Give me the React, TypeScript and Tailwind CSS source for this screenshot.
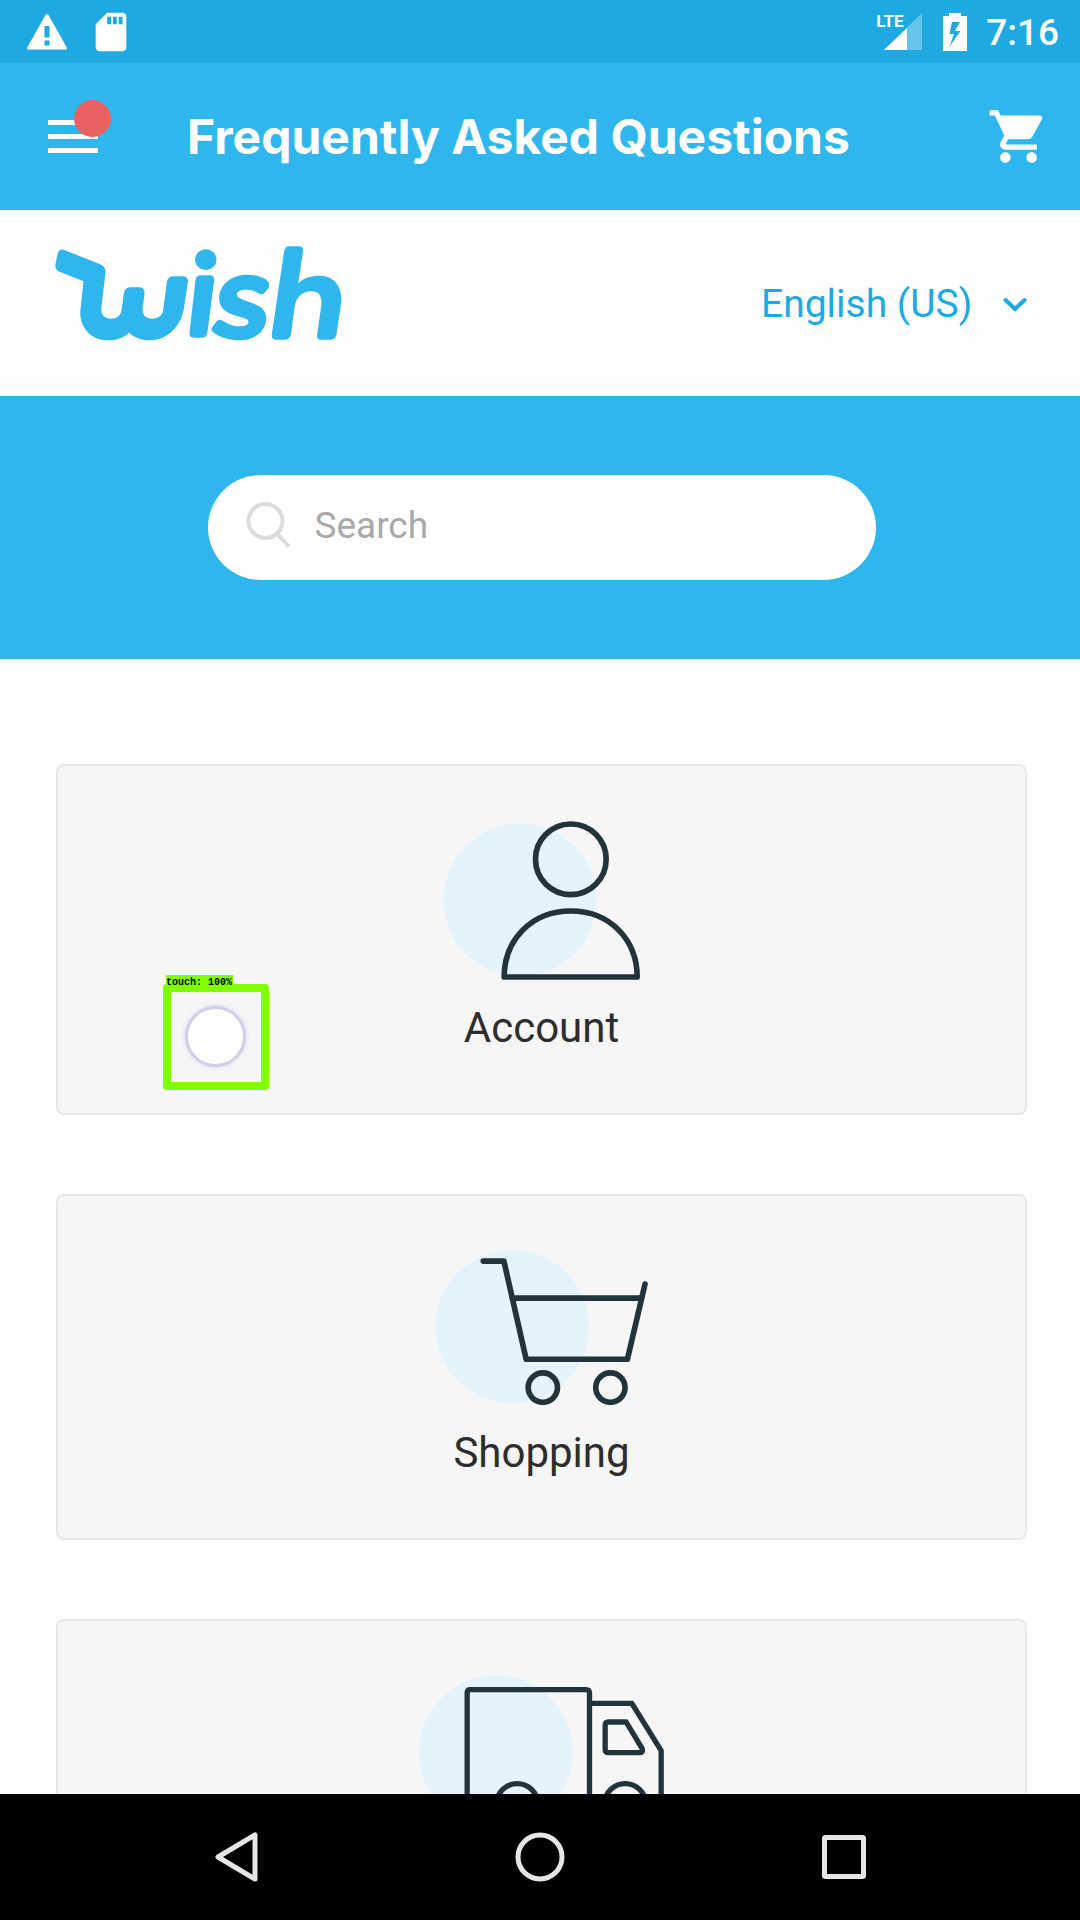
import type { ReactNode } from "react";
import { MdSdCard, MdShoppingCart } from "react-icons/md";

function StatusBar() {
  return (
    <div className="flex h-[63px] shrink-0 items-center justify-between bg-[#1fa9e2] pr-[21px] pl-[27px] text-white">
      <div className="flex items-center gap-[21px]">
        <svg viewBox="0 0 40 36" className="h-9 w-10" aria-hidden="true">
          <path
            fill="#fff"
            fillRule="evenodd"
            d="M18.500 1Q20 -1 21.500 1L39.500 33Q40.500 35.500 38.500 35.500H1.500Q-0.500 35.500 0.500 33ZM17.500 12V23.500H22.500V12ZM17.500 26.500V31.500H22.500V26.500Z"
          />
        </svg>
        <MdSdCard className="size-[46px]" />
      </div>
      <div className="flex items-center">
        <div className="relative h-[38px] w-[46px]">
          <svg viewBox="0 0 46 38" className="h-full w-full" aria-hidden="true">
            <path d="M8 37L46 0V37Z" fill="#fff" fillOpacity="0.32" />
            <path d="M8 37L31 15V37Z" fill="#fff" />
          </svg>
          <span className="absolute top-0 left-0 font-['Liberation_Sans_Narrow',Roboto] text-[17px] leading-4 font-bold">
            LTE
          </span>
        </div>
        <svg viewBox="0 0 24 38" className="ml-[21px] h-[38px] w-6" aria-hidden="true">
          <path
            fill="#fff"
            fillRule="evenodd"
            d="M6 0H18V3H24V38H0V3H6ZM9 9L6.500 21H11L6.500 33.500L17.500 18H12L17 9Z"
          />
        </svg>
        <span className="mt-[3px] ml-[19px] font-[Roboto] text-[37px] leading-[44px] font-medium">7:16</span>
      </div>
    </div>
  );
}

function Header() {
  return (
    <header className="flex h-[147px] shrink-0 items-center bg-[#2fb6ec] pr-[30px] pl-12 text-white">
      <button type="button" aria-label="Menu" className="relative flex w-[50px] flex-col gap-[9px]">
        <span className="h-[5px] bg-white" />
        <span className="h-[5px] bg-white" />
        <span className="h-[5px] bg-white" />
        <span className="absolute -top-[20px] left-[26px] size-[37px] rounded-full bg-[#eb6161]" />
      </button>
      <h1 className="ml-[89px] flex-1 font-[Inter] text-[48px] leading-[60px] font-bold whitespace-nowrap">
        Frequently Asked Questions
      </h1>
      <button type="button" aria-label="Cart">
        <MdShoppingCart className="size-[63px]" />
      </button>
    </header>
  );
}

function WishLogo() {
  return (
    <svg viewBox="165 110 860 285" className="h-[95px] w-[287px]" fill="#2fb6ec" role="img" aria-label="Wish">
      <path d="M190 121L300 165Q318 173 316 190L303 300Q303 328 332 328Q362 328 365 298L371 252Q373 234 391 234H416Q435 234 433 253L427 300Q427 328 455 328Q487 328 490 295L500 218Q503 201 521 201H546Q565 201 563 218L551 300C540 355 500 393 448 393C420 393 400 382 387 370C372 384 350 393 322 393C270 393 235 350 241 300L250 216L180 188Q163 181 166 164L172 135Q176 117 190 121Z" />
      <path d="M603 198H628Q643 198 642 212L622 368Q620 385 606 385H581Q566 385 568 371L586 212Q588 198 603 198Z" />
      <ellipse cx="617" cy="151" rx="32" ry="31" />
      <path d="M797 210C780 199 760 196 740 196C695 196 657 225 657 268C657 300 685 312 710 320C735 327 745 329 745 338C745 346 735 351 715 351C695 351 685 344 665 333Q657 329 650 336L637 352Q630 361 638 368C660 385 690 393 718 393C765 393 798 365 798 325C798 298 775 287 745 277C722 270 710 265 710 255C710 247 720 241 738 241C755 241 765 245 778 253Q787 258 794 250L805 235Q811 220 797 210Z" />
      <path d="M852 125Q855 111 868 111H895Q910 111 909 123L894 222C910 205 935 199 958 199C1005 199 1027 235 1023 280L1009 375Q1006 391 992 391H962Q949 391 951 378L963 290C967 262 957 246 933 246C905 246 886 265 882 300L873 372Q870 391 855 391H828Q813 391 815 375Z" />
    </svg>
  );
}

function LanguageRow() {
  return (
    <div className="flex h-[186px] items-start justify-between pt-9 pr-[53px] pl-[55px]">
      <WishLogo />
      <div className="relative mt-[34px]">
        <select
          aria-label="Language"
          className="appearance-none bg-transparent pr-[54px] font-[Roboto] text-[39px] leading-[48px] text-[#1fa9e2] outline-none"
        >
          <option>English (US)</option>
        </select>
        <svg
          viewBox="0 0 24 16"
          className="pointer-events-none absolute top-[17px] right-0 h-4 w-6"
          fill="none"
          stroke="#1fa9e2"
          strokeWidth="4"
          strokeLinecap="round"
          aria-hidden="true"
        >
          <path d="M2.500 3L12 12L21.500 3" />
        </svg>
      </div>
    </div>
  );
}

function SearchBand() {
  return (
    <div className="flex h-[263px] items-center justify-center bg-[#2fb6ec] pl-1">
      <label className="flex h-[105px] w-[62%] items-center rounded-full bg-white pl-[38px]">
        <svg viewBox="0 0 45 48" className="mt-[-5px] h-12 w-[45px]" fill="none" stroke="#dcdcdc" aria-hidden="true">
          <circle cx="19.500" cy="20" r="17" strokeWidth="4" />
          <path d="M31 32.500L43 45.500" strokeWidth="4" />
        </svg>
        <input
          type="search"
          aria-label="Search"
          placeholder="Search"
          className="mb-1 ml-[23px] min-w-0 flex-1 bg-transparent font-[Roboto] text-[37px] leading-[48px] outline-none placeholder:text-[#a9a9a9]"
        />
      </label>
    </div>
  );
}

const LINE = "#22333b";
const DISC = "#e4f3fc";

function AccountIcon() {
  return (
    <svg viewBox="130 90 590 480" className="h-40 w-[197px]" fill="none" aria-hidden="true">
      <circle cx="361" cy="330" r="229" fill={DISC} />
      <g stroke={LINE} strokeWidth="17" strokeLinejoin="round">
        <circle cx="513" cy="208" r="106" />
        <path d="M313 561C313 450 395 363 513 363C631 363 712 450 712 561Z" />
      </g>
    </svg>
  );
}

function ShoppingIcon() {
  return (
    <svg viewBox="105 90 640 465" className="h-[155px] w-[213px]" fill="none" aria-hidden="true">
      <circle cx="337" cy="320" r="230" fill={DISC} />
      <g stroke={LINE} strokeWidth="17" strokeLinejoin="round" strokeLinecap="round">
        <path d="M250 123H312L379 418H683L736 192" />
        <path d="M338 234H725" />
        <circle cx="429" cy="503" r="44" />
        <circle cx="632" cy="503" r="44" />
      </g>
    </svg>
  );
}

function TruckIcon() {
  return (
    <svg viewBox="58 225 734 465" className="h-[155px] w-[245px]" fill="none" aria-hidden="true">
      <circle cx="288" cy="457" r="230" fill={DISC} />
      <g stroke={LINE} strokeWidth="16" strokeLinejoin="round">
        <path d="M290 620H210Q202 620 202 612V278Q202 269 211 269H558Q569 269 569 280V620H414" />
        <path d="M569 310H696L784 452V620H738M569 620H614" />
        <path d="M626 366H679L727 446Q731 458 719 458H626Q616 458 616 448V376Q616 366 626 366Z" />
        <circle cx="352" cy="613" r="62" />
        <circle cx="676" cy="613" r="62" />
      </g>
    </svg>
  );
}

function TouchMarker() {
  return (
    <div className="pointer-events-none absolute top-[209px] left-[105px]">
      <div className="ml-[3px] w-[67px] bg-[#80ff00] pt-px font-['Liberation_Mono'] text-[10px] leading-[13px] font-bold whitespace-nowrap text-black">
        touch: 100%
      </div>
      <div className="mt-[-5px] flex size-[106px] items-center justify-center rounded-[4px] border-8 border-[#80ff00]">
        <span className="mr-[2px] mb-[2px] size-[61px] rounded-full border-[3px] border-[#cfcfe8] bg-[#fdfdfe] shadow-[0_0_4px_#d5d5ea]" />
      </div>
    </div>
  );
}

function TopicCard({ icon, topic, caption, children }: { icon: ReactNode; topic: string; caption?: string; children?: ReactNode }) {
  return (
    <a
      href="#"
      aria-label={topic}
      className="relative flex flex-col items-center rounded-lg border-2 border-[#e6e7e7] bg-[#f6f6f6] pt-[54px] pb-[61px]"
    >
      {icon}
      {caption && <span className="mt-6 font-[Roboto] text-[42px] leading-[48px] text-[#2d2d2d]">{caption}</span>}
      {children}
    </a>
  );
}

function NavBar() {
  return (
    <nav className="grid h-[126px] shrink-0 grid-cols-3 items-center justify-items-center bg-black px-[84px]">
      <button type="button" aria-label="Back">
        <svg viewBox="0 0 50 50" className="size-[50px]" fill="none" stroke="#e6e6e6" strokeWidth="5" strokeLinejoin="round">
          <path d="M7 25L44 3V47Z" />
        </svg>
      </button>
      <button type="button" aria-label="Home">
        <svg viewBox="0 0 50 50" className="size-[50px]" fill="none" stroke="#e6e6e6" strokeWidth="5">
          <circle cx="25" cy="25" r="22" />
        </svg>
      </button>
      <button type="button" aria-label="Overview">
        <svg viewBox="0 0 50 50" className="size-[50px]" fill="none" stroke="#e6e6e6" strokeWidth="5">
          <rect x="5.500" y="5.500" width="39" height="39" rx="1" />
        </svg>
      </button>
    </nav>
  );
}

export default function App() {
  return (
    <div className="flex h-screen flex-col bg-[#fefefe] font-[Roboto,sans-serif]">
      <StatusBar />
      <Header />
      <main className="min-h-0 flex-1 overflow-hidden">
        <LanguageRow />
        <SearchBand />
        <div className="flex flex-col gap-[79px] pt-[105px] pr-[53px] pl-14">
          <TopicCard icon={<AccountIcon />} topic="Account" caption="Account">
            <TouchMarker />
          </TopicCard>
          <TopicCard icon={<ShoppingIcon />} topic="Shopping" caption="Shopping" />
          <TopicCard icon={<TruckIcon />} topic="Shipping" />
        </div>
      </main>
      <NavBar />
    </div>
  );
}
